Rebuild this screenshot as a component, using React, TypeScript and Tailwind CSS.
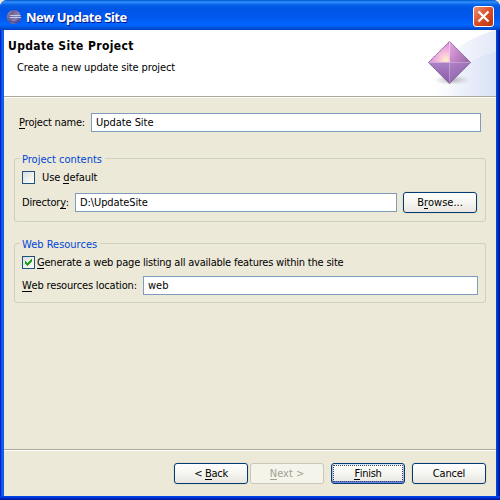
import React from 'react';

const field = 'h-[19px] border border-[#7f9db9] bg-white pl-1 flex items-center';
const button =
  'h-[21px] w-[74px] shrink-0 rounded-[3px] border border-[#003c74] bg-linear-to-b from-white via-[#f5f5f1] to-[#e9e6de] flex items-center justify-center shadow-[0_0_0_1px_#e4e0cf]';

function Text({ children, className = '' }: { children: React.ReactNode; className?: string }) {
  return <span className={`block whitespace-pre leading-[13px] ${className}`}>{children}</span>;
}

function Key({ children }: { children: string }) {
  return <span className="border-b border-current inline-block h-[13px]">{children}</span>;
}

function Checkbox({ checked = false }: { checked?: boolean }) {
  return (
    <span className="block size-[13px] shrink-0 border border-[#1c5180] bg-linear-to-br from-[#dcdcd7] to-white">
      {checked && (
        <svg className="block size-[11px]" viewBox="0 0 11 11" shapeRendering="crispEdges">
          <path fill="#21a121" d="M2 4h1v3H2zM3 5h1v3H3zM4 6h1v3H4zM5 5h1v3H5zM6 4h1v3H6zM7 3h1v3H7zM8 2h1v3H8z" />
        </svg>
      )}
    </span>
  );
}

function EclipseLogo() {
  return (
    <svg className="size-4" viewBox="0 0 16 16">
      <defs>
        <linearGradient id="globe" x1="0" y1="0" x2="1" y2="0.6">
          <stop offset="0" stopColor="#c9a3a8" />
          <stop offset="0.35" stopColor="#6a5e90" />
          <stop offset="0.7" stopColor="#8681b8" />
          <stop offset="1" stopColor="#554f9a" />
        </linearGradient>
      </defs>
      <circle cx="8" cy="8" r="7.1" fill="url(#globe)" />
      <path d="M4 6.500h10.500M3.500 8.500h11.500" stroke="#c5cbe8" strokeWidth="1" />
      <path d="M3 11.500q5 4 10 0" stroke="#3d3478" strokeWidth="2" fill="none" opacity="0.5" />
    </svg>
  );
}

function HeaderArt() {
  return (
    <svg className="block h-[66px] w-[92px]" viewBox="404 30 92 66">
      <defs>
        <linearGradient id="sweep" gradientUnits="userSpaceOnUse" x1="432" y1="0" x2="496" y2="0">
          <stop offset="0" stopColor="#fff" />
          <stop offset="1" stopColor="#e3e9f8" />
        </linearGradient>
        <linearGradient id="arc" gradientUnits="userSpaceOnUse" x1="446" y1="0" x2="496" y2="0">
          <stop offset="0" stopColor="#dfe5f7" stopOpacity="0" />
          <stop offset="1" stopColor="#d5def5" />
        </linearGradient>
        <radialGradient id="glow" gradientUnits="userSpaceOnUse" cx="446" cy="60" r="20">
          <stop offset="0" stopColor="#fff0cc" />
          <stop offset="0.5" stopColor="#f0b0e0" />
          <stop offset="1" stopColor="#c583cc" />
        </radialGradient>
        <linearGradient id="right" x1="0" x2="1" y1="0" y2="0.6">
          <stop offset="0" stopColor="#eaa6e2" />
          <stop offset="1" stopColor="#a06cae" />
        </linearGradient>
        <linearGradient id="low" x1="0" x2="0" y1="0" y2="1">
          <stop offset="0" stopColor="#ad82c6" />
          <stop offset="1" stopColor="#8658a6" />
        </linearGradient>
        <linearGradient id="lowRight" x1="0" x2="0.6" y1="0" y2="1">
          <stop offset="0" stopColor="#ae82c6" />
          <stop offset="1" stopColor="#8a60a8" />
        </linearGradient>
        <radialGradient id="shade">
          <stop offset="0" stopColor="#777" stopOpacity="0.55" />
          <stop offset="1" stopColor="#999" stopOpacity="0" />
        </radialGradient>
      </defs>
      <path d="M404 30h92v66h-92z" fill="#fff" />
      <path d="M496 30C470 38 440 50 430 96H496z" fill="url(#sweep)" />
      <path d="M496 52Q468 58 452 78Q448 86 446 96H496z" fill="url(#arc)" opacity="0.7" />
      <ellipse cx="452" cy="80" rx="18" ry="5" fill="url(#shade)" />
      <path d="M449.500 41L428 62.500h21.500z" fill="url(#glow)" />
      <path d="M449.500 41L471 62.500h-21.500z" fill="url(#right)" />
      <path d="M428 62.500h21.500v21.500z" fill="url(#low)" />
      <path d="M471 62.500h-21.500v21.500z" fill="url(#lowRight)" />
      <path d="M449.500 42v20" stroke="#f8d3ee" opacity="0.5" />
      <path d="M429 62.500h40M449.500 63v19" stroke="#cfa6dc" opacity="0.35" />
      <path d="M449.500 41.500l21 21L449.500 83.500L428.500 62.500z" fill="none" stroke="#836a92" strokeDasharray="1.5 0.7" />
    </svg>
  );
}

function GroupBox({ label, className, children }: { label: string; className: string; children: React.ReactNode }) {
  return (
    <fieldset className={`relative ml-[10px] w-[472px] rounded-[3px] border border-[#d0d0bf] ${className}`}>
      <div className="absolute -top-[6px] left-[5px] bg-[#ece9d8] pr-[3px] pl-[2px] text-[#0046d5]">
        <Text>{label}</Text>
      </div>
      {children}
    </fieldset>
  );
}

export default function App() {
  return (
    <div className="h-[500px] w-[500px] overflow-hidden bg-[#ece9d8] font-['DejaVu_Sans_Condensed','DejaVu_Sans',sans-serif] text-[11px] text-black">
      <div className="flex h-[500px] w-[500px] flex-col rounded-t-[7px] bg-[linear-gradient(90deg,#0019cf_0,#0831d9_1px,#166aee_2px,#0855dd_4px,#0048f1_496px,#001ea0_499px,#00138c_500px)]">
        <header className="flex h-[30px] shrink-0 items-center rounded-t-[7px] bg-[linear-gradient(180deg,#0058c8_0,#3290ff_2px,#0560e8_5px,#0055e5_9px,#0058ee_17px,#0066ff_25px,#0058e8_27px,#0040c0_30px)] pr-[6px] pl-[6px] pt-[3px]">
          <EclipseLogo />
          <h1 className="ml-1 flex-1 whitespace-pre font-['Noto_Sans',sans-serif] text-[13px] leading-[18px] font-bold tracking-[-0.47px] text-white [text-shadow:1px_1px_#00138c]">New Update Site</h1>
          <button className="flex size-[21px] items-center justify-center rounded-[3px] border border-white bg-linear-to-br from-[#ee8d70] via-[#dc4d27] to-[#bd320b]">
            <svg className="size-[13px]" viewBox="0 0 13 13">
              <path d="M1.500 1.500l10 10M11.500 1.500l-10 10" stroke="#fff" strokeWidth="2.300" />
            </svg>
          </button>
        </header>

        <div className="ml-1 flex h-[466px] w-[492px] flex-col bg-[#ece9d8]">
          <div className="flex h-[68px] shrink-0 justify-between border-b border-white bg-white">
            <div className="flex h-[67px] w-full justify-between border-b border-[#aca899]">
              <div className="pt-[10px] pl-1">
                <Text className="text-[12px] font-bold tracking-[0.37px]">Update Site Project</Text>
                <Text className="mt-2 ml-[9px] tracking-[-0.13px]">Create a new update site project</Text>
              </div>
              <HeaderArt />
            </div>
          </div>

          <div className="mt-[15px] flex h-[19px] items-center pl-[15px]">
            <Text className="w-[72px] tracking-[-0.2px]"><Key>P</Key>roject name:</Text>
            <div className={`${field} w-[390px]`}><Text className="tracking-[-0.05px]">Update Site</Text></div>
          </div>

          <GroupBox label="Project contents" className="mt-[26px] h-[64px]">
            <div className="mt-[12px] ml-[7px] flex h-[13px] items-center">
              <Checkbox />
              <Text className="ml-[7px] tracking-[-0.1px]">Use <Key>d</Key>efault</Text>
            </div>
            <div className="mt-2 ml-[7px] flex h-[21px] items-center">
              <Text className="w-[53px] tracking-[-0.2px]">Director<Key>y</Key>:</Text>
              <div className={`${field} w-[322px]`}><Text className="tracking-[-0.1px]">D:\UpdateSite</Text></div>
              <div className={`${button} ml-[6px]`}><Text>B<Key>r</Key>owse...</Text></div>
            </div>
          </GroupBox>

          <GroupBox label="Web Resources" className="mt-[21px] h-[60px]">
            <div className="mt-[12px] ml-[7px] flex h-[13px] items-center">
              <Checkbox checked />
              <Text className="ml-[2px] tracking-[-0.205px]"><Key>G</Key>enerate a web page listing all available features within the site</Text>
            </div>
            <div className="mt-[7px] ml-[7px] flex h-[19px] items-center">
              <Text className="w-[121px] tracking-[-0.18px]"><Key>W</Key>eb resources location:</Text>
              <div className={`${field} w-[335px]`}><Text>web</Text></div>
            </div>
          </GroupBox>

          <footer className="mt-auto flex h-[47px] shrink-0 border-t border-[#aca899]">
            <div className="flex h-[46px] w-full justify-end border-t border-white pt-[12px] pr-[10px]">
              <div className={button}><Text className="tracking-[-0.3px]">&lt; <Key>B</Key>ack</Text></div>
              <div className="ml-[2px] flex h-[21px] w-[74px] items-center justify-center rounded-[3px] border border-[#c9c7ba] bg-[#f5f4ea] text-[#a1a192]"><Text><Key>N</Key>ext &gt;</Text></div>
              <div className={`${button} ml-[7px] shadow-[inset_0_1px_#cee7ff,inset_0_-2px_#6982ee,inset_1px_0_#a9bff5,inset_-1px_0_#a9bff5]`}>
                <div className="flex h-[17px] w-[70px] items-center justify-center border border-dotted border-[#444]"><Text className="tracking-[-0.3px]"><Key>F</Key>inish</Text></div>
              </div>
              <div className={`${button} ml-[7px]`}><Text className="tracking-[-0.2px]">Cancel</Text></div>
            </div>
          </footer>
        </div>
        <div className="h-1 shrink-0 bg-[linear-gradient(180deg,#0048f1,#0030d0_50%,#00138c)]" />
      </div>
    </div>
  );
}
